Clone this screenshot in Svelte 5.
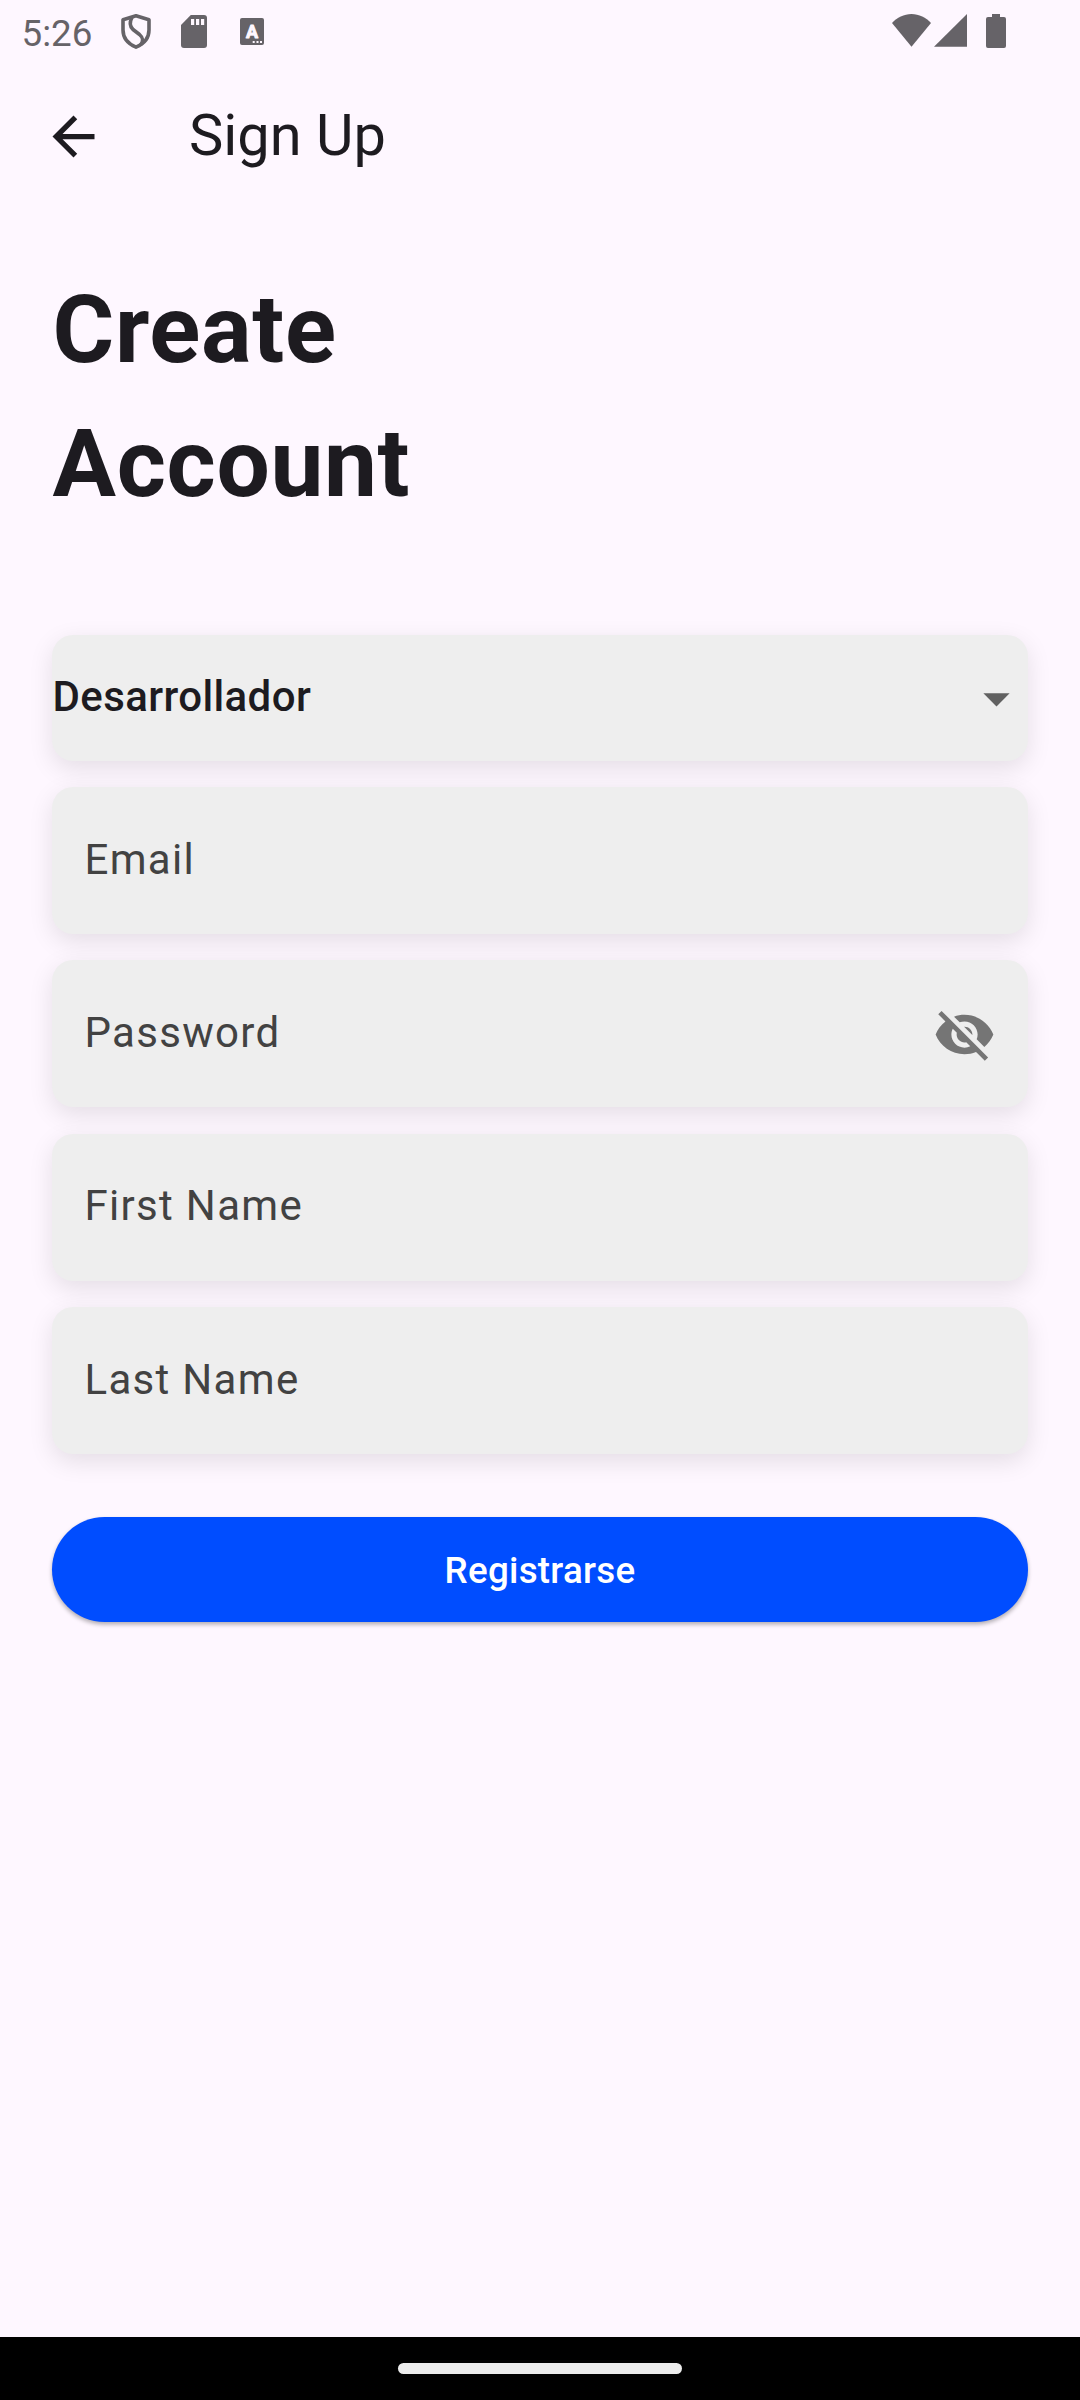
<script>
  const fields = [
    { label: 'Email' },
    { label: 'Password', secret: true },
    { label: 'First Name' },
    { label: 'Last Name' }
  ];
</script>

<div class="screen">
  <header class="status">
    <span class="clock">5:26</span>
    <svg class="shield" width="30" height="35" viewBox="0 0 30 35">
      <path d="M15 1.800 28 5.800V16C28 24 22.500 30 15 33.200 7.500 30 2 24 2 16V5.800Z" />
      <path d="M11 3.500C8.500 8 8.500 12 12 15.500L18.500 20.500C22.500 24 22.500 27 19.500 31" />
    </svg>
    <svg class="sd" width="26" height="33" viewBox="0 0 26 33">
      <path class="solid" d="M9.800 0H23a3 3 0 0 1 3 3V30a3 3 0 0 1-3 3H3a3 3 0 0 1-3-3V10Z" />
      <path class="cut" d="M10 4h3.200v6H10zM15 4h3.200v6H15zM20 4h3.200v6H20z" />
    </svg>
    <svg class="badge" width="24" height="27" viewBox="0 0 24 27">
      <rect class="solid" width="24" height="27" rx="2" />
      <text x="12" y="19.500" text-anchor="middle">A</text>
      <path class="cut" d="M12.700 23h2v2h-2zM16.500 23h2v2h-2zM20 23h2v2h-2z" />
    </svg>
    <span class="spacer"></span>
    <svg class="wifi" width="39" height="33" viewBox="0 0 39 33">
      <path class="solid" d="M0 9C5 3.500 12 0 19.500 0S34 3.500 39 9L19.500 32.700Z" />
    </svg>
    <svg class="cell" width="33" height="33" viewBox="0 0 33 33">
      <path class="solid" d="M33 0V32.700H0Z" />
    </svg>
    <svg class="battery" width="20" height="34" viewBox="0 0 20 34">
      <path class="solid" d="M6 0h8v3h4a2 2 0 0 1 2 2V32a2 2 0 0 1-2 2H2a2 2 0 0 1-2-2V5a2 2 0 0 1 2-2h4Z" />
    </svg>
  </header>

  <nav class="appbar">
    <svg class="back" viewBox="0 0 24 24">
      <path d="M20 11H7.830l5.590-5.590L12 4l-8 8 8 8 1.410-1.410L7.830 13H20z" />
    </svg>
    <span class="title">Sign Up</span>
  </nav>

  <main>
    <h1>Create<br />Account</h1>

    <div class="form">
      <div class="box select">
        <span>Desarrollador</span>
        <svg class="icon" viewBox="0 0 24 24"><path d="M7 10l5 5 5-5z" /></svg>
      </div>

      {#each fields as field}
        <div class="box field">
          <span>{field.label}</span>
          {#if field.secret}
            <svg class="icon" viewBox="0 0 24 24">
              <path d="M12 7c2.760 0 5 2.240 5 5 0 .650-.130 1.260-.360 1.830l2.920 2.920c1.510-1.260 2.700-2.890 3.430-4.750-1.730-4.390-6-7.500-11-7.500-1.400 0-2.740.250-3.980.700l2.160 2.160C10.740 7.130 11.350 7 12 7zM2 4.270l2.280 2.280.460.460C3.080 8.300 1.780 10.020 1 12c1.730 4.390 6 7.500 11 7.500 1.550 0 3.030-.300 4.380-.840l.420.420L19.730 22 21 20.730 3.270 3 2 4.270zM7.530 9.800l1.550 1.550c-.050.210-.080.430-.080.650 0 1.660 1.340 3 3 3 .220 0 .440-.030.650-.080l1.550 1.550c-.670.330-1.410.530-2.200.530-2.760 0-5-2.240-5-5 0-.790.200-1.530.530-2.200zm4.310-.780l3.150 3.150.020-.160c0-1.660-1.340-3-3-3l-.170.010z" />
            </svg>
          {/if}
        </div>
      {/each}
    </div>

    <button>Registrarse</button>
  </main>

  <footer><div class="pill"></div></footer>
</div>

<style>
  :global(body) {
    margin: 0;
    background: #fef7ff;
  }

  .screen {
    display: flex;
    flex-direction: column;
    width: 1080px;
    height: 2400px;
    background: #fef7ff;
    color: #1d1b20;
    font-family: Roboto, 'Liberation Sans', sans-serif;
  }

  svg {
    display: block;
    flex: none;
  }

  .status {
    display: flex;
    align-items: flex-start;
    height: 63px;
    padding: 0 74px 0 21.500px;
    box-sizing: border-box;
    color: #666368;
  }

  .clock {
    width: 99.500px;
    margin-top: 12px;
    font-size: 36.750px;
    line-height: 44px;
  }

  .solid {
    fill: #666368;
  }

  .cut {
    fill: #fef7ff;
  }

  .shield {
    margin-top: 14px;
    fill: none;
    stroke: #666368;
    stroke-width: 3.600;
    stroke-linejoin: round;
  }

  .sd {
    margin: 15px 0 0 30px;
  }

  .badge {
    margin: 18px 0 0 33px;
  }

  .badge text {
    fill: #fef7ff;
    stroke: #fef7ff;
    stroke-width: 0.900;
    stroke-linejoin: round;
    font-size: 18px;
    font-weight: 700;
  }

  .spacer {
    flex: 1;
  }

  .wifi {
    margin-top: 14px;
  }

  .cell {
    margin: 14px 0 0 3px;
  }

  .battery {
    margin: 14px 0 0 19px;
  }

  .appbar {
    display: flex;
    align-items: center;
    height: 147px;
    padding-left: 42px;
  }

  .back {
    width: 63px;
    height: 63px;
    fill: #1d1b20;
  }

  .title {
    margin-left: 84px;
    padding-bottom: 2px;
    font-size: 57.750px;
    line-height: 73px;
  }

  main {
    flex: 1;
    padding: 52.500px 52px 0;
  }

  h1 {
    margin: 0 0 0 0.500px;
    font-size: 94.500px;
    line-height: 134px;
    font-weight: 700;
    letter-spacing: 0.650px;
  }

  .form {
    display: flex;
    flex-direction: column;
    gap: 26.250px;
    margin-top: 104.300px;
  }

  .box {
    display: flex;
    align-items: center;
    justify-content: space-between;
    box-sizing: border-box;
    height: 147px;
    border-radius: 21px;
    background: #eeeeee;
    box-shadow: 0 7.900px 25px rgba(0, 0, 0, 0.1);
    font-size: 42px;
    line-height: 63px;
  }

  .box span {
    padding-bottom: 3px;
  }

  .icon {
    width: 63px;
    height: 63px;
    margin-top: 1px;
    fill: #757575;
  }

  .select {
    height: 126px;
    padding-left: 0.500px;
    font-weight: 500;
    letter-spacing: 0.390px;
  }

  .select .icon {
    margin-right: 0.500px;
    fill: #616161;
  }

  .field {
    padding: 0 32px 0 32.500px;
    color: #424242;
    letter-spacing: 1.310px;
  }

  .field span {
    padding-bottom: 2.200px;
  }

  button {
    display: block;
    width: 100%;
    height: 105px;
    margin-top: 63px;
    padding: 2px 0 0;
    border: 0;
    border-radius: 52.500px;
    background: #004dff;
    box-shadow: 0 2.600px 4px rgba(0, 0, 0, 0.3);
    color: #fff;
    font-family: inherit;
    font-size: 36.750px;
    font-weight: 500;
    letter-spacing: 0.260px;
  }

  footer {
    display: flex;
    justify-content: center;
    align-items: center;
    height: 63px;
    background: #000;
  }

  .pill {
    width: 284px;
    height: 11px;
    border-radius: 5.500px;
    background: #ececec;
  }
</style>
